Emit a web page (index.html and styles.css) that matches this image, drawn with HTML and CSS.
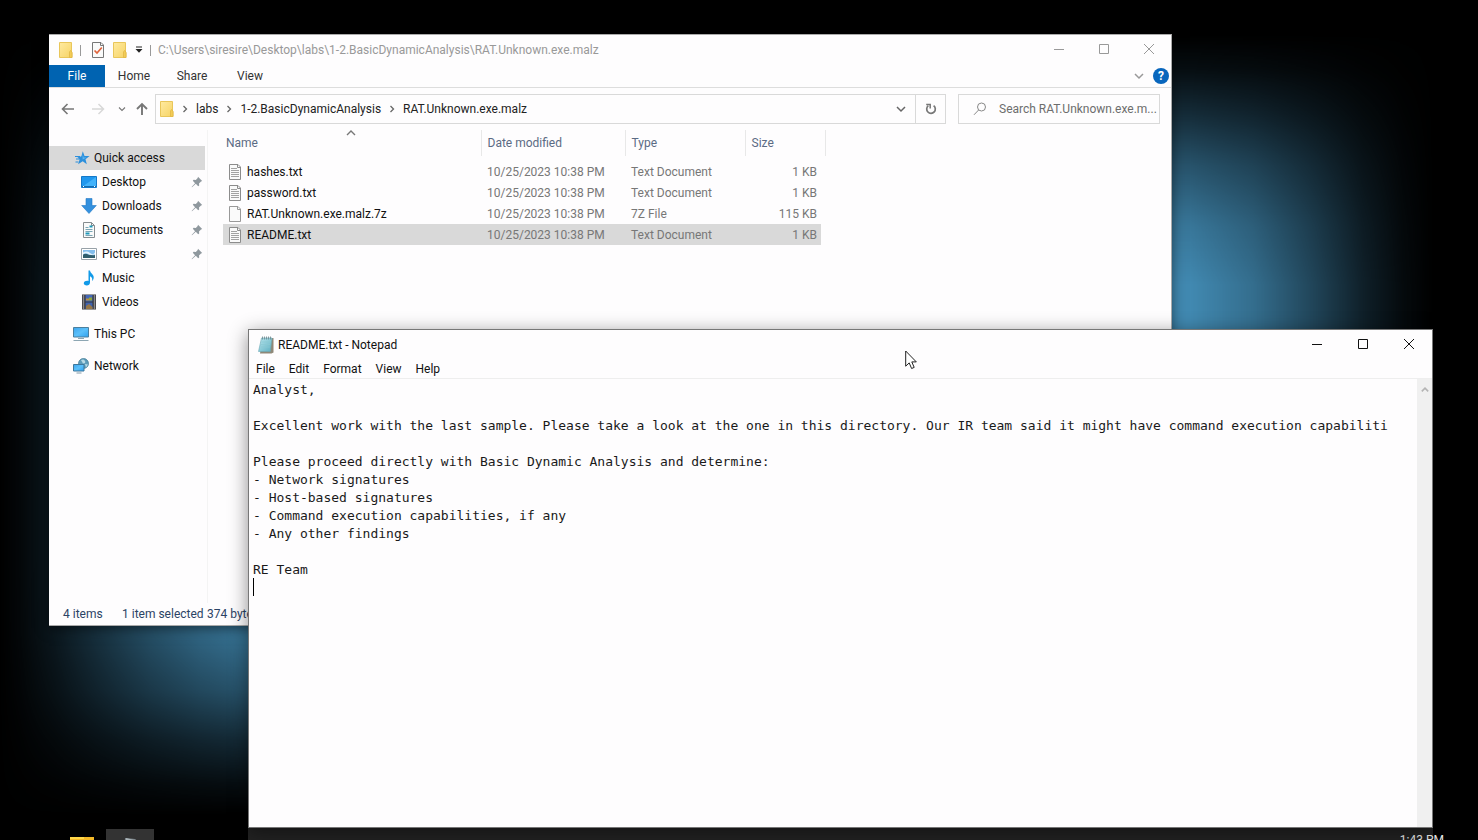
FILE: index.html
```html
<!DOCTYPE html>
<html lang="en">
<head>
<meta charset="utf-8">
<title>Desktop</title>
<link rel="stylesheet" href="styles.css">
</head>
<body>
<svg class="defs" aria-hidden="true">
  <defs>
    <linearGradient id="gFolder" x1="0" y1="0" x2="1" y2="1"><stop offset="0" stop-color="#ffeaa0"/><stop offset="1" stop-color="#f6d365"/></linearGradient>
    <linearGradient id="gScreen" x1="0" y1="0" x2="1" y2="1"><stop offset="0" stop-color="#3da5ee"/><stop offset=".5" stop-color="#5cc0fa"/><stop offset="1" stop-color="#2fa0ee"/></linearGradient>
    <linearGradient id="gNote" x1="0" y1="0" x2="1" y2="1"><stop offset="0" stop-color="#b9e6ee"/><stop offset="1" stop-color="#5fb0c2"/></linearGradient>
    <symbol id="folder" viewBox="0 0 14 16"><path d="M.5.5h12v10h.5v5H.5z" fill="url(#gFolder)" stroke="#e9c65a"/><path d="M10.500 15.500v-5.500l1-1.500 1.500 1.500v5.500z" fill="#f3cc56" stroke="#dfb544" stroke-width=".7"/></symbol>
    <symbol id="text-file" viewBox="0 0 14 16"><path d="M1.500.5h8.500l2.500 2.500v12.500h-11z" fill="#fafafa" stroke="#8c8c8c"/><path d="M9.500.500v3h3" fill="none" stroke="#8c8c8c"/><path d="M3 4.500h6M3 6.500h8M3 8.500h8M3 10.500h8M3 12.500h8" stroke="#a2a2a2"/></symbol>
    <symbol id="blank-file" viewBox="0 0 14 16"><path d="M1.500.5h8.500l2.500 2.500v12.500h-11z" fill="#fafafa" stroke="#999"/><path d="M9.500.500v3h3" fill="none" stroke="#999"/></symbol>
    <symbol id="pin" viewBox="0 0 12 12"><path d="M7 .8 11.200 5l-1.200.4L8 7.400l.2 2.200-1 .6-2.400-2.400L1 11.300l-.4-.4 3.500-3.700L1.800 4.800l.8-1 2.200.2L6.700 2z" fill="#8f989e"/></symbol>
    <symbol id="chevron-right" viewBox="0 0 6 8"><path d="M1.500 1 4.500 4 1.500 7" fill="none" stroke="#666" stroke-width="1.300"/></symbol>
    <symbol id="chevron-down" viewBox="0 0 10 8"><path d="M1 2l4 4 4-4" fill="none" stroke="currentColor" stroke-width="1.500"/></symbol>
    <symbol id="chevron-up" viewBox="0 0 10 8"><path d="M1 6l4-4 4 4" fill="none" stroke="currentColor" stroke-width="1.400"/></symbol>
    <symbol id="min" viewBox="0 0 12 12"><path d="M1 6.500h10" stroke="currentColor"/></symbol>
    <symbol id="max" viewBox="0 0 12 12"><path d="M1.500 1.500h9v9h-9z" fill="none" stroke="currentColor"/></symbol>
    <symbol id="close" viewBox="0 0 12 12"><path d="M1 1l10 10M11 1 1 11" stroke="currentColor"/></symbol>
  </defs>
</svg>

<main class="desktop">
  <div class="wallpaper"></div>

  <section class="window explorer" aria-label="File Explorer">
    <header class="titlebar">
      <svg class="ico-folder" aria-hidden="true"><use href="#folder"/></svg>
      <span class="divider"></span>
      <button class="quick" aria-label="Properties"><svg width="14" height="16" viewBox="0 0 14 16"><path d="M1.500.5h8.500l2.500 2.500v12.500h-11z" fill="#fafafa" stroke="#777"/><path d="M9.500.500v3h3" fill="none" stroke="#777"/><path d="M3.500 8.500 6 11l4.800-5.500" fill="none" stroke="#e0643c" stroke-width="1.700"/></svg></button>
      <button class="quick" aria-label="New folder"><svg class="ico-folder"><use href="#folder"/></svg></button>
      <button class="quick" aria-label="Customize toolbar"><svg width="8" height="8" viewBox="0 0 8 8"><path d="M1 1h6" stroke="#222"/><path d="M.5 3h7L4 6.800z" fill="#222"/></svg></button>
      <span class="divider last"></span>
      <h1 class="caption">C:\Users\siresire\Desktop\labs\1-2.BasicDynamicAnalysis\RAT.Unknown.exe.malz</h1>
      <div class="controls">
        <button aria-label="Minimize"><svg><use href="#min"/></svg></button>
        <button aria-label="Maximize"><svg><use href="#max"/></svg></button>
        <button aria-label="Close"><svg><use href="#close"/></svg></button>
      </div>
    </header>

    <nav class="ribbon" aria-label="Ribbon">
      <button class="tab file">File</button>
      <button class="tab">Home</button>
      <button class="tab">Share</button>
      <button class="tab">View</button>
      <button class="expand" aria-label="Expand ribbon"><svg class="chev"><use href="#chevron-down"/></svg></button>
      <button class="help" aria-label="Help">?</button>
    </nav>

    <div class="navbar">
      <div class="history">
        <button aria-label="Back"><svg width="14" height="12" viewBox="0 0 14 12"><path d="M13 6H1.500M6.500 1l-5 5 5 5" fill="none" stroke="#777" stroke-width="1.600"/></svg></button>
        <button aria-label="Forward"><svg width="14" height="12" viewBox="0 0 14 12"><path d="M1 6h11.500M7.500 1l5 5-5 5" fill="none" stroke="#d8d8d8" stroke-width="1.500"/></svg></button>
        <button class="recent" aria-label="Recent locations"><svg width="8" height="6"><use href="#chevron-down"/></svg></button>
        <button class="up" aria-label="Up"><svg width="12" height="14" viewBox="0 0 12 14"><path d="M6 13V2M1 7l5-5 5 5" fill="none" stroke="#777" stroke-width="1.900"/></svg></button>
      </div>
      <div class="address">
        <svg class="ico-folder" aria-hidden="true"><use href="#folder"/></svg>
        <svg class="crumb-sep" aria-hidden="true"><use href="#chevron-right"/></svg>
        <a href="#labs">labs</a>
        <svg class="crumb-sep" aria-hidden="true"><use href="#chevron-right"/></svg>
        <a href="#analysis">1-2.BasicDynamicAnalysis</a>
        <svg class="crumb-sep" aria-hidden="true"><use href="#chevron-right"/></svg>
        <a href="#rat">RAT.Unknown.exe.malz</a>
        <button class="drop" aria-label="Previous locations"><svg class="chev"><use href="#chevron-down"/></svg></button>
        <button class="refresh" aria-label="Refresh"><svg width="12" height="12" viewBox="0 0 12 12"><path d="M8.600 2.600A4.300 4.300 0 1 1 3.300 2.700" fill="none" stroke="#777" stroke-width="1.700"/><path d="M1.200 1.500h4v4" fill="none" stroke="#777" stroke-width="1.500"/></svg></button>
      </div>
      <label class="search">
        <svg width="14" height="14" viewBox="0 0 14 14" aria-hidden="true"><circle cx="8.500" cy="5" r="4" fill="none" stroke="#888"/><path d="M5.600 8 1 12.800" stroke="#888"/></svg>
        <input type="text" aria-label="Search folder" placeholder="Search RAT.Unknown.exe.m...">
      </label>
    </div>

    <div class="content">
      <nav class="sidebar" aria-label="Folders">
        <a class="root selected" href="#quick"><svg viewBox="0 0 16 16"><path d="M8.800 1.200 10.500 6l5.100.1-4.100 3.100 1.300 5-4.100-2.900-4.600 3 1.600-5.100-2.300-1.800 4-1.200z" fill="#2b8fdc"/><path d="M1 6.500h5M2 9h4M1.500 12h3" stroke="#2b8fdc"/><path d="M8.700 4 9.600 7.500l3 .1-4 2z" fill="#62b9f0"/></svg>Quick access</a>
        <a href="#desktop"><svg viewBox="0 0 16 16"><path d="M.5 2.500h15v11H.5z" fill="#1f97ee" stroke="#1478c8"/><path d="M1 13 15 3v10z" fill="#42b2fa"/><path d="M1 12.500h14" stroke="#126bb0"/><path d="M2 12.500h1M13 12.500h1" stroke="#fff"/></svg>Desktop<svg class="pin"><use href="#pin"/></svg></a>
        <a href="#downloads"><svg viewBox="0 0 16 16"><path d="M5 .5h6v7h4.300L8 15.500.7 7.500H5z" fill="#3490de" stroke="#2478c4" stroke-width=".6"/></svg>Downloads<svg class="pin"><use href="#pin"/></svg></a>
        <a href="#documents"><svg viewBox="0 0 16 16"><path d="M2.500.500h8l3 3v12h-11z" fill="#fafafa" stroke="#858c90"/><path d="M10.500.500v3h3" fill="none" stroke="#858c90"/><path d="M4.500 5.500h3M4.500 7.500h7M4.500 9.500h7M4.500 13.500h7" stroke="#79a5b5"/><path d="M8.500 4.500h3M4.500 11.500h4" stroke="#1f98ba" stroke-width="2"/></svg>Documents<svg class="pin"><use href="#pin"/></svg></a>
        <a href="#pictures"><svg viewBox="0 0 16 16"><path d="M.5 2.500h15v11H.5z" fill="#fff" stroke="#98a1a8"/><path d="M2 4h12v8H2z" fill="#83bdec"/><path d="M2 8.500c3-2 6 1.500 12 .5v3H2z" fill="#305d6c"/><path d="M2 6.500q4-2 7 .5t5-.5v2q-5 1-7-.5t-5 .5z" fill="#e2f2fd"/></svg>Pictures<svg class="pin"><use href="#pin"/></svg></a>
        <a href="#music"><svg viewBox="0 0 16 16"><path d="M7.500.500h1.500c.3 3 4.300 4 3.700 7.500-.3 1.500-1 2.500-1.700 3 .8-2.500-.2-4-2-4.700v6.200c0 2-1.500 3-3.200 3S2.500 14.500 2.800 13c.3-1.700 2.700-2.700 4.700-2z" fill="#129ae8"/></svg>Music</a>
        <a href="#videos"><svg viewBox="0 0 16 16"><path d="M1 .5h14v15H1z" fill="#35353b"/><path d="M4.500 1h7v6.500h-7z" fill="#4468b8"/><path d="M4.500 8.500h7v6.500h-7z" fill="#3e62b0"/><path d="M5 4.500h3v2H5z" fill="#b98f43"/><path d="M8 3.500h3v3H8z" fill="#8fa63c"/><path d="M5 12l3-2 3.500 3v2H5z" fill="#967646"/><path d="M2.500 1.500v13M13.500 1.500v13" stroke="#dedede" stroke-width="1.500" stroke-dasharray="1 1"/></svg>Videos</a>
        <a class="root" href="#pc"><svg viewBox="0 0 16 16"><path d="M.5 1.500h15v9.500H.5z" fill="url(#gScreen)" stroke="#4b7f9e"/><path d="M5 12.500h6M.5 14.500h15" stroke="#8da6b3"/></svg>This PC</a>
        <a class="root" href="#network"><svg viewBox="0 0 16 16"><circle cx="10.500" cy="5.500" r="5" fill="#5e9cba" stroke="#3d7893" stroke-width=".7"/><path d="M8 2q3-1.500 4 1t-2 2.500zM12 6l3 .5-2 3z" fill="#b8d9e5"/><path d="M.5 6.500h10.500v6.500H.5z" fill="url(#gScreen)" stroke="#3f779b"/><path d="M3.500 15h5" stroke="#819aa8"/></svg>Network</a>
      </nav>

      <div class="files">
        <svg class="sort" aria-hidden="true"><use href="#chevron-up"/></svg>
        <table>
          <colgroup><col class="c-name"><col class="c-date"><col class="c-type"><col class="c-size"></colgroup>
          <thead>
            <tr><th scope="col">Name</th><th scope="col">Date modified</th><th scope="col">Type</th><th scope="col">Size</th></tr>
          </thead>
          <tbody>
            <tr><td><svg class="ico-file"><use href="#text-file"/></svg>hashes.txt</td><td>10/25/2023 10:38 PM</td><td>Text Document</td><td>1 KB</td></tr>
            <tr><td><svg class="ico-file"><use href="#text-file"/></svg>password.txt</td><td>10/25/2023 10:38 PM</td><td>Text Document</td><td>1 KB</td></tr>
            <tr><td><svg class="ico-file"><use href="#blank-file"/></svg>RAT.Unknown.exe.malz.7z</td><td>10/25/2023 10:38 PM</td><td>7Z File</td><td>115 KB</td></tr>
            <tr class="selected"><td><svg class="ico-file"><use href="#text-file"/></svg>README.txt</td><td>10/25/2023 10:38 PM</td><td>Text Document</td><td>1 KB</td></tr>
          </tbody>
        </table>
      </div>
    </div>

    <footer class="status"><span class="count">4 items</span><span class="chosen">1 item selected</span><span>374 bytes</span></footer>
  </section>

  <section class="window notepad" aria-label="Notepad">
    <header class="titlebar">
      <svg width="16" height="18" viewBox="0 0 16 18" aria-hidden="true"><path d="M4.500 2h11v14.500l-2 1H2z" fill="#8f8878"/><path d="M3.500 2H14l-1.700 13.500H.5z" fill="url(#gNote)" stroke="#6ba9b6" stroke-width=".6"/><path d="M3.500 6h9M3 8.500h9M2.700 11h9" stroke="#8bc8d3" stroke-width=".7"/><path d="M4.500.500v3M6.500.500v3M8.500.500v3M10.500.500v3M12.500.500v3" stroke="#6c868c" stroke-width=".8"/></svg>
      <h2 class="caption">README.txt - Notepad</h2>
      <div class="controls">
        <button aria-label="Minimize"><svg><use href="#min"/></svg></button>
        <button aria-label="Maximize"><svg><use href="#max"/></svg></button>
        <button aria-label="Close"><svg><use href="#close"/></svg></button>
      </div>
    </header>
    <nav class="menu" aria-label="Menu">
      <button>File</button><button>Edit</button><button>Format</button><button>View</button><button>Help</button>
    </nav>
    <div class="editor">
      <textarea aria-label="Document text" spellcheck="false" wrap="off">Analyst,

Excellent work with the last sample. Please take a look at the one in this directory. Our IR team said it might have command execution capabiliti

Please proceed directly with Basic Dynamic Analysis and determine:
- Network signatures
- Host-based signatures
- Command execution capabilities, if any
- Any other findings

RE Team
</textarea>
      <span class="caret"></span>
      <div class="scrollbar"><svg width="8" height="8" viewBox="0 0 10 8"><path d="M1 7l4-4 4 4" fill="none" stroke="#b4b4b4" stroke-width="2"/></svg></div>
    </div>
  </section>

  <svg class="pointer" width="12" height="20" viewBox="0 0 12 20" aria-hidden="true"><path d="M.7 1v15.200l3.500-3.300 2.400 5.600 2.600-1.100-2.400-5.500h4.500z" fill="#fff" stroke="#222"/></svg>
</main>

<footer class="taskbar">
  <button class="task" aria-label="File Explorer"><svg width="24" height="20" viewBox="0 0 24 20"><path d="M0 0h24v20H0z" fill="#f3b929"/><path d="M0 0h14v2H0z" fill="#ffd84a"/></svg></button>
  <button class="task active" aria-label="Notepad"><svg width="24" height="20" viewBox="0 0 24 20"><path d="M7 1l10 1 4 3-3 15H6z" fill="#7d868b"/><path d="M8 1l8 2 2 3H8z" fill="#aab4b8"/></svg></button>
  <time class="clock">1:43 PM</time>
</footer>
</body>
</html>
```
FILE: styles.css
```css
* { box-sizing: border-box; }

body {
  margin: 0;
  height: 100vh;
  display: flex;
  flex-direction: column;
  overflow: hidden;
  background: #000;
  color: #111;
  font: 12px/16px Roboto, "Open Sans", sans-serif;
}

button {
  margin: 0;
  padding: 0;
  border: 0;
  background: none;
  color: inherit;
  font: inherit;
  display: flex;
  align-items: center;
  justify-content: center;
}

a { color: inherit; text-decoration: none; }
svg { flex: none; display: block; }
.defs { position: absolute; width: 0; height: 0; }

/* Desktop */
.desktop { position: relative; flex: 1; min-height: 0; }

.wallpaper {
  position: absolute;
  inset: 0;
  background: #4189b1;
  mask-image:
    linear-gradient(to right, transparent 0, rgba(0,0,0,.05) 20px, rgba(0,0,0,.18) 55px, rgba(0,0,0,.38) 100px, rgba(0,0,0,.6) 150px, rgba(0,0,0,.78) 200px, #000 290px, #000 calc(100% - 288px), rgba(0,0,0,.8) calc(100% - 225px), rgba(0,0,0,.5) calc(100% - 165px), rgba(0,0,0,.23) calc(100% - 115px), rgba(0,0,0,.07) calc(100% - 75px), transparent calc(100% - 45px)),
    linear-gradient(to bottom, transparent 35px, rgba(0,0,0,.1) 70px, rgba(0,0,0,.32) 115px, rgba(0,0,0,.6) 165px, rgba(0,0,0,.86) 225px, #000 285px, #000 560px, rgba(0,0,0,.94) 635px, rgba(0,0,0,.68) 690px, rgba(0,0,0,.34) 740px, rgba(0,0,0,.1) 785px, transparent 815px);
  mask-composite: intersect;
}

.window {
  position: absolute;
  display: flex;
  flex-direction: column;
  background: #fefdfe;
  border: 1px solid #777;
}

.explorer { inset: 34px 306px 202px 49px; border-color: #aaa; border-width: 1px 1px 1px 0; box-shadow: 0 2px 12px rgba(0,0,0,.5); }
.notepad { inset: 329px 45px 0 248px; box-shadow: 0 4px 18px rgba(0,0,0,.45); }

.titlebar { display: flex; align-items: center; height: 29px; }
.caption { margin: 0; font: inherit; white-space: nowrap; }
.controls { display: flex; align-self: flex-start; margin-left: auto; }
.controls button { width: 46px; height: 28px; }
.controls svg { width: 12px; height: 12px; }

/* Explorer */
.explorer .titlebar { height: 30px; padding-left: 10px; color: #999; }
.explorer .controls button { width: 45px; }
.ico-folder { width: 14px; height: 16px; }
.divider { width: 1px; height: 11px; margin: 0 10px 0 7px; background: #999; }
.divider.last { margin: 0 7px 0 7px; }
.quick { margin-right: 8px; }
.quick:nth-of-type(3) { margin-right: 0; }

.ribbon { display: flex; height: 23px; border-bottom: 1px solid #ddd; color: #333; }
.tab { width: 58px; }
.tab.file { width: 56px; background: #0063b1; color: #fff; }
.expand { width: 20px; margin-left: auto; color: #999; }
.help { align-self: center; width: 16px; height: 16px; margin: 0 2px 0 4px; border-radius: 50%; background: #0866bd; color: #fff; font-weight: 700; }
.chev { width: 10px; height: 8px; }

.navbar { display: flex; align-items: center; height: 42px; padding-right: 11px; }
.history { display: flex; align-items: center; width: 106px; padding-left: 12px; color: #777; }
.history button { margin-right: 16px; }
.history .recent { margin: 0 10px 0 -3px; }
.history .up { margin-right: 0; }
.address { display: flex; align-items: center; flex: 1; height: 30px; margin-right: 12px; padding-left: 4px; border: 1px solid #d9d9d9; color: #222; }
.crumb-sep { width: 6px; height: 8px; margin: 0 8px; }
.drop { width: 28px; margin-left: auto; color: #666; }
.refresh { align-self: stretch; width: 30px; border-left: 1px solid #d9d9d9; }
.search { display: flex; align-items: center; gap: 12px; width: 202px; height: 30px; padding-left: 14px; border: 1px solid #d9d9d9; }
.search input { flex: 1; min-width: 0; padding: 0; border: 0; outline: 0; background: none; font: inherit; color: #666; }
.search input::placeholder { color: #6d6d6d; opacity: 1; }

.content { display: flex; flex: 1; min-height: 0; }
.sidebar { display: flex; flex-direction: column; width: 159px; padding: 16px 2px 0 0; border-right: 1px solid #f4f4f4; }
.sidebar a { display: flex; align-items: center; gap: 5px; height: 24px; padding-left: 32px; padding-right: 2px; }
.sidebar a.root { padding-left: 24px; margin-top: 8px; }
.sidebar a.root.selected { padding-left: 25px; gap: 4px; margin-top: 0; background: #d9d9d9; }
.sidebar svg { width: 16px; height: 16px; }
.sidebar .pin { width: 12px; height: 12px; margin-left: auto; }

.files { position: relative; flex: 1; padding-left: 15px; }
.sort { position: absolute; left: 138px; top: -1px; width: 10px; height: 8px; color: #777; }
table { width: 602px; table-layout: fixed; border-collapse: collapse; color: #777; }
.c-name { width: 258px; }
.c-date { width: 144px; }
.c-type { width: 120px; }
.c-size { width: 80px; }
th { height: 26px; padding: 0 6px; border-right: 1px solid #e8e8e8; color: #5b6b84; font-weight: 400; text-align: left; }
th:first-child { padding-left: 3px; }
thead::after { content: ""; display: block; height: 5px; }
td { height: 21px; padding: 0 6px; white-space: nowrap; }
td:first-child { display: flex; align-items: center; gap: 5px; padding-left: 5px; color: #111; }
td:last-child { text-align: right; padding-right: 8px; }
.ico-file { width: 14px; height: 16px; }
tr.selected { background: linear-gradient(to left, transparent 4px, #d9d9d9 4px); }

.status { display: flex; align-items: center; height: 22px; padding-left: 14px; color: #2b4365; }
.count { width: 59px; }
.chosen { width: 85px; white-space: nowrap; }

/* Notepad */
.notepad .titlebar { padding-left: 9px; gap: 4px; }
.menu { display: flex; gap: 14px; height: 20px; padding: 1px 0 0 7px; border-bottom: 1px solid #eee; }
.editor { position: relative; display: flex; flex: 1; min-height: 0; }
.editor textarea {
  flex: 1;
  min-width: 0;
  padding: 2px 0 0 4px;
  border: 0;
  outline: 0;
  resize: none;
  overflow: hidden;
  background: none;
  color: #1a1a1a;
  font: 13px/18px "DejaVu Sans Mono", "Liberation Mono", monospace;
}
.caret { position: absolute; left: 4px; top: 199px; width: 1px; height: 18px; background: #000; }
.scrollbar { display: flex; justify-content: center; width: 15px; padding-top: 6px; background: #f0f0f0; }

.pointer { position: absolute; left: 905px; top: 350px; }

/* Taskbar */
.taskbar {
  display: flex;
  align-items: flex-start;
  height: 12px;
  padding: 1px 34px 0 58px;
  overflow: hidden;
  background: linear-gradient(to right, #000 248px, #222 248px, #222 calc(100% - 45px), #000 calc(100% - 45px));
}
.task { width: 48px; height: 40px; padding-top: 8px; align-items: flex-start; }
.task.active { background: #333; }
.clock { margin: 3px 0 0 auto; color: #eee; }
```
